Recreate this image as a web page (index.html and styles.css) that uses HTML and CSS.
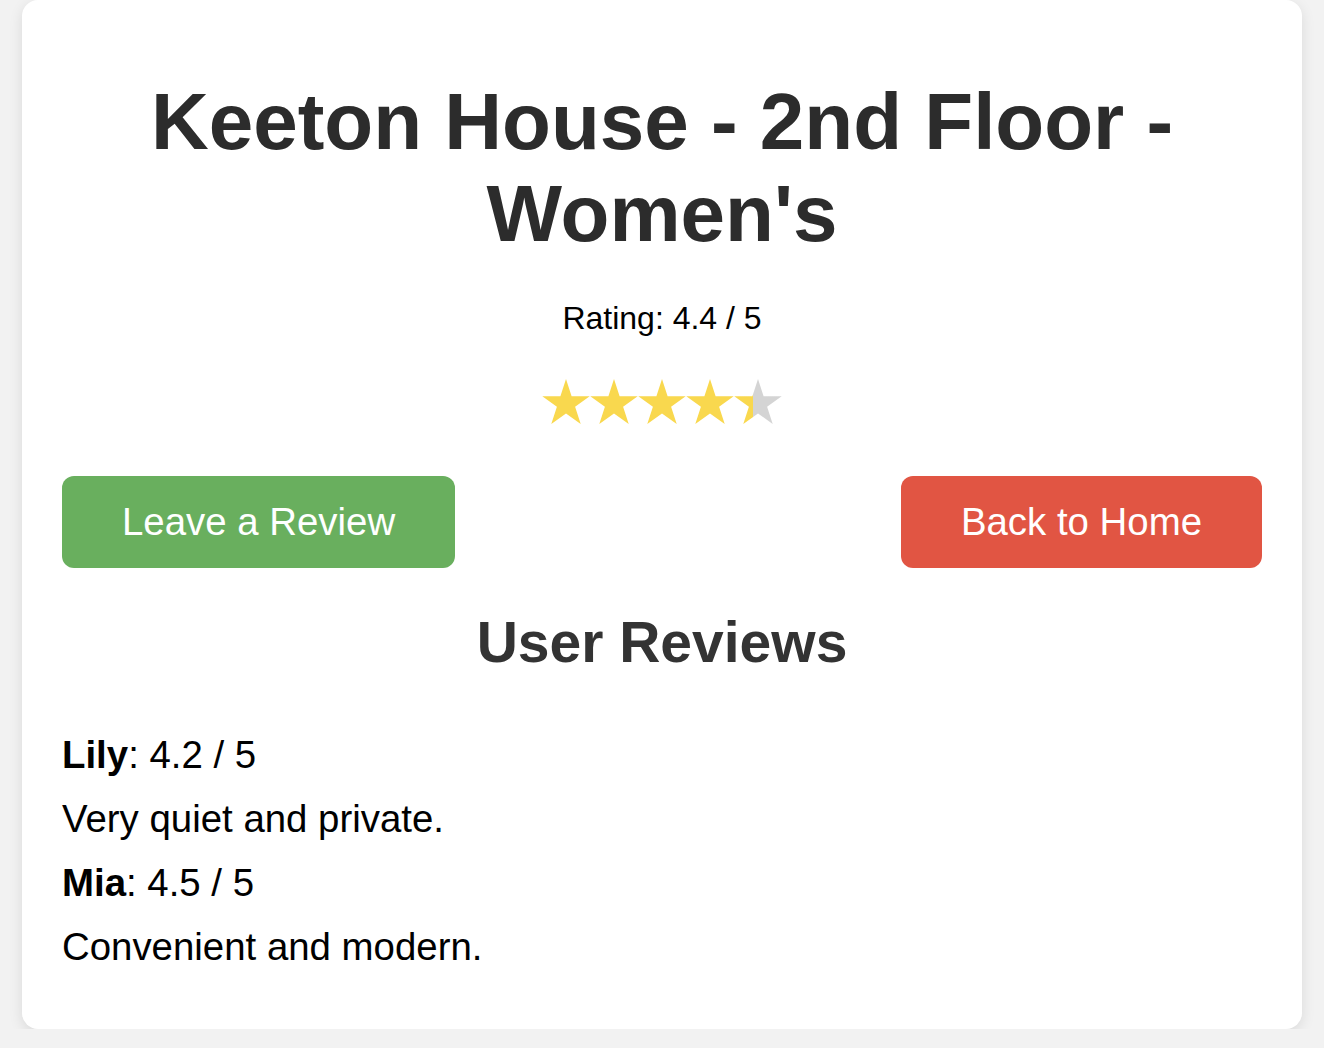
FILE: index.html
```html
<!DOCTYPE html>
<html lang="en">
<head>
<meta charset="utf-8">
<title>Keeton House - 2nd Floor - Women's</title>
<link rel="stylesheet" href="styles.css">
</head>
<body>
<main class="card">
  <h1 class="title">Keeton House - 2nd Floor - Women's</h1>
  <p class="rating">Rating: 4.4 / 5</p>
  <div class="stars" aria-label="4.4 out of 5 stars">
    <svg class="star" viewBox="0 0 48 48"><polygon class="full" points="24,1 29.6,18.2 47.7,18.2 33.1,28.8 38.7,46 24,35.4 9.3,46 14.9,28.8 0.3,18.2 18.4,18.2"/></svg>
    <svg class="star" viewBox="0 0 48 48"><polygon class="full" points="24,1 29.6,18.2 47.7,18.2 33.1,28.8 38.7,46 24,35.4 9.3,46 14.9,28.8 0.3,18.2 18.4,18.2"/></svg>
    <svg class="star" viewBox="0 0 48 48"><polygon class="full" points="24,1 29.6,18.2 47.7,18.2 33.1,28.8 38.7,46 24,35.4 9.3,46 14.9,28.8 0.3,18.2 18.4,18.2"/></svg>
    <svg class="star" viewBox="0 0 48 48"><polygon class="full" points="24,1 29.6,18.2 47.7,18.2 33.1,28.8 38.7,46 24,35.4 9.3,46 14.9,28.8 0.3,18.2 18.4,18.2"/></svg>
    <svg class="star" viewBox="0 0 48 48">
      <defs>
        <linearGradient id="part">
          <stop offset="40%" stop-color="#f9d84e"/>
          <stop offset="40%" stop-color="#d4d4d4"/>
        </linearGradient>
      </defs>
      <polygon fill="url(#part)" points="24,1 29.6,18.2 47.7,18.2 33.1,28.8 38.7,46 24,35.4 9.3,46 14.9,28.8 0.3,18.2 18.4,18.2"/>
    </svg>
  </div>
  <div class="actions">
    <a class="btn btn-green" href="#">Leave a Review</a>
    <a class="btn btn-red" href="#">Back to Home</a>
  </div>
  <h2 class="subtitle">User Reviews</h2>
  <div class="reviews">
    <p class="line"><strong>Lily</strong>: 4.2 / 5</p>
    <p class="line">Very quiet and private.</p>
    <p class="line"><strong>Mia</strong>: 4.5 / 5</p>
    <p class="line">Convenient and modern.</p>
  </div>
</main>
</body>
</html>
```

FILE: styles.css
```css
html, body {
  margin: 0;
  padding: 0;
}
body {
  background: #f2f2f2;
  font-family: "Liberation Sans", Arial, Helvetica, sans-serif;
  color: #000;
}
.card {
  width: 1280px;
  box-sizing: border-box;
  margin: 0 auto;
  background: #fff;
  border-radius: 16px;
  box-shadow: 0 4px 14px rgba(0, 0, 0, 0.1);
  padding: 36px 40px 50px;
  display: flex;
  flex-direction: column;
}
.title {
  margin: 40px 0 0;
  font-size: 80px;
  line-height: 92px;
  font-weight: bold;
  color: #2c2c2c;
  text-align: center;
}
.rating {
  margin: 40px 0 0;
  font-size: 32px;
  line-height: 37px;
  text-align: center;
}
.stars {
  margin-top: 41px;
  display: flex;
  justify-content: center;
  height: 48px;
}
.star {
  width: 48px;
  height: 48px;
  display: block;
}
.full {
  fill: #f9d84e;
}
.actions {
  margin-top: 50px;
  display: flex;
  justify-content: space-between;
}
.btn {
  display: block;
  font-size: 38.4px;
  line-height: 44px;
  padding: 24px 60px;
  border-radius: 12px;
  color: #fff;
  text-decoration: none;
}
.btn-green {
  background: #69af5e;
}
.btn-red {
  background: #e15543;
}
.subtitle {
  margin: 41px 0 0;
  font-size: 57px;
  line-height: 66px;
  font-weight: bold;
  color: #333;
  text-align: center;
}
.reviews {
  margin-top: 48px;
}
.line {
  margin: 0;
  font-size: 38.4px;
  line-height: 64px;
}
```
